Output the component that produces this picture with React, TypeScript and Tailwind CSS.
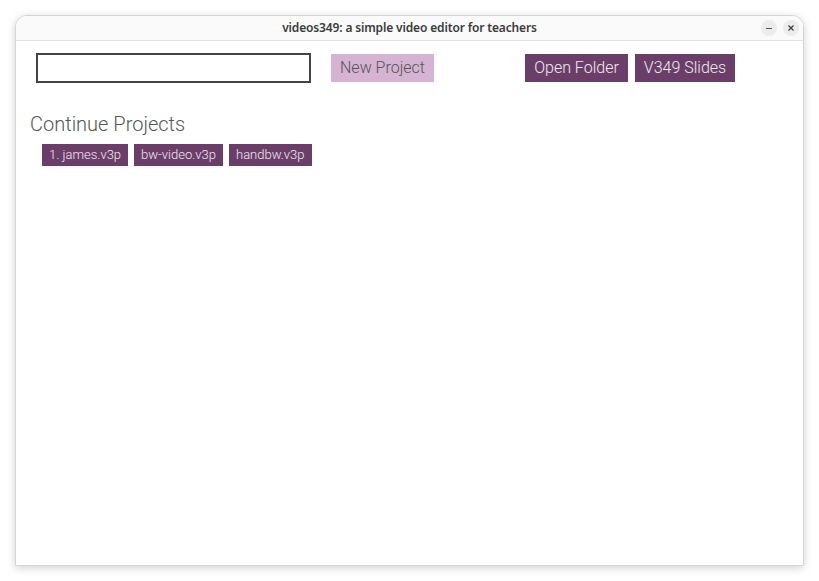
import React from "react";

export default function App() {
  const projects = ["1. james.v3p", "bw-video.v3p", "handbw.v3p"];
  return (
    <div className="w-[819px] h-[581px] bg-white flex flex-col overflow-hidden">
      <div className="ml-[15px] mt-[15px] w-[789px] h-[551px] flex flex-col rounded-t-[12px] border border-[#d4d4d4] bg-white shadow-[0_2px_8px_rgba(0,0,0,0.18)] overflow-hidden">
        <div className="h-[25px] shrink-0 bg-[#fafafa] border-b border-[#e2e2e2] flex items-center relative">
          <div className="flex-1 text-center text-[12px] font-semibold text-[#3a3a3a] [font-family:'Noto_Sans',sans-serif] tracking-[-0.15px]">
            videos349: a simple video editor for teachers
          </div>
          <div className="absolute right-[4px] top-[4px] flex gap-[6px]">
            <div className="w-[16px] h-[16px] rounded-full bg-[#ececec] flex items-center justify-center">
              <div className="w-[6px] h-[1px] bg-[#555]" />
            </div>
            <div className="w-[16px] h-[16px] rounded-full bg-[#ececec] flex items-center justify-center text-[#444]">
              <svg width="8" height="8" viewBox="0 0 8 8">
                <path d="M1.5 1.5 L6.5 6.5 M6.5 1.5 L1.5 6.5" stroke="currentColor" strokeWidth="1.3" />
              </svg>
            </div>
          </div>
        </div>
        <div className="flex-1 flex flex-col [font-family:Roboto,sans-serif] font-light">
          <div className="flex items-center pl-[20px] pt-[12px]">
            <div className="w-[275px] h-[30px] border-2 border-[#444] bg-white" />
            <div className="ml-[20px] w-[103px] h-[28px] bg-[#d6b3d3] text-[#555] text-[16px] flex items-center justify-center">
              New Project
            </div>
            <div className="ml-[91px] w-[103px] h-[28px] bg-[#6b3d69] text-white/90 text-[16px] flex items-center justify-center">
              Open Folder
            </div>
            <div className="ml-[7px] w-[100px] h-[28px] bg-[#6b3d69] text-white/90 text-[16px] flex items-center justify-center">
              V349 Slides
            </div>
          </div>
          <div className="pl-[14px] mt-[29px] text-[20px] leading-[24px] text-[#555]">
            Continue Projects
          </div>
          <div className="flex gap-[6px] pl-[26px] mt-[8px]">
            {projects.map((p) => (
              <div
                key={p}
                className="h-[22px] px-[7px] bg-[#6b3d69] text-white/90 text-[13px] flex items-center"
              >
                {p}
              </div>
            ))}
          </div>
        </div>
      </div>
    </div>
  );
}
